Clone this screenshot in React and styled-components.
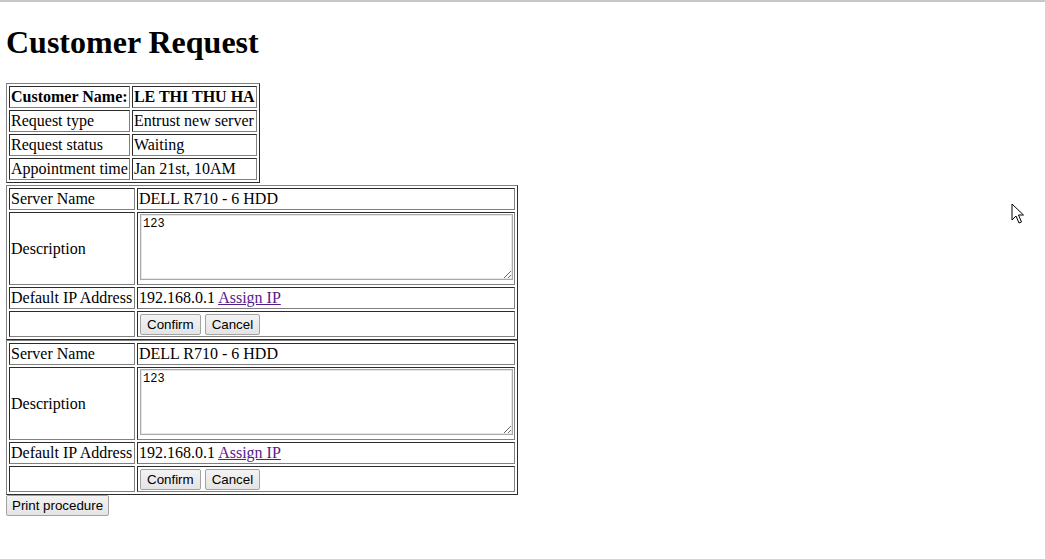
import React from "react";
import styled, { createGlobalStyle } from "styled-components";

const GlobalStyle = createGlobalStyle`
  html, body {
    margin: 0;
    background: #fff;
  }
  body {
    padding: 0 6px;
    border-top: 2px solid #c8c8c8;
    font-family: "Liberation Serif", "Times New Roman", serif;
    font-size: 16px;
    color: #000;
  }
`;

const Page = styled.main`
  position: relative;
  display: flow-root;
  min-height: 557px;
`;

const Title = styled.h1`
  font-size: 32px;
  font-weight: bold;
  margin: 22px 0 22px;
`;

const InfoTable = styled.table`
  border: 1px outset gray;
  border-spacing: 2px;
  border-collapse: separate;
`;

const ServerTable = styled(InfoTable)`
  width: 512px;
  margin-top: ${(p) => (p.$first ? "2px" : "0")};
`;

const Cell = styled.td`
  border: 1px inset gray;
  padding: 1px;
  font-weight: ${(p) => (p.$bold ? "bold" : "normal")};
  white-space: nowrap;
  vertical-align: middle;
`;

const LabelCell = styled(Cell)`
  width: 123px;
`;

const DescBox = styled.textarea`
  display: block;
  width: 373px;
  height: 66px;
  margin: 0 0 3px 1px;
  padding: 2px;
  box-sizing: border-box;
  border: 1px solid #a9a9a9;
  box-shadow: inset 0 0 0 1px #e6e6e6;
  font-family: "Liberation Mono", "DejaVu Sans Mono", monospace;
  font-size: 12px;
  line-height: 14px;
  color: #000;
  background: #fff;
  resize: both;
`;

const AssignLink = styled.a`
  color: #551a8b;
  text-decoration: underline;
  cursor: pointer;
`;

const Button = styled.button`
  font-family: "Liberation Sans", Arial, sans-serif;
  font-size: 13.33px;
  height: 21px;
  padding: 0 ${(p) => (p.$wide ? "5px" : "6px")};
  margin: 0;
  border: 1px solid #a3a3a3;
  border-radius: 2px;
  background: linear-gradient(#f3f3f3, #e4e4e4);
  color: #000;
  vertical-align: middle;
`;

const ButtonRow = styled.div`
  display: flex;
  gap: 4px;
  padding: 1px 0 0 1px;
`;

const Cursor = styled.svg`
  position: absolute;
  left: 1005px;
  top: 201px;
`;

const servers = [
  { name: "DELL R710 - 6 HDD", desc: "123", ip: "192.168.0.1" },
  { name: "DELL R710 - 6 HDD", desc: "123", ip: "192.168.0.1" },
];

function ServerBlock({ server, first }) {
  return (
    <ServerTable $first={first}>
      <tbody>
        <tr>
          <LabelCell>Server Name</LabelCell>
          <Cell>{server.name}</Cell>
        </tr>
        <tr>
          <LabelCell>Description</LabelCell>
          <Cell>
            <DescBox defaultValue={server.desc} />
          </Cell>
        </tr>
        <tr>
          <LabelCell>Default IP Address</LabelCell>
          <Cell>
            {server.ip} <AssignLink href="#">Assign IP</AssignLink>
          </Cell>
        </tr>
        <tr>
          <LabelCell></LabelCell>
          <Cell>
            <ButtonRow>
              <Button>Confirm</Button>
              <Button>Cancel</Button>
            </ButtonRow>
          </Cell>
        </tr>
      </tbody>
    </ServerTable>
  );
}

export default function App() {
  return (
    <Page>
      <GlobalStyle />
      <Title>Customer Request</Title>
      <InfoTable>
        <tbody>
          <tr>
            <Cell $bold>Customer Name:</Cell>
            <Cell $bold>LE THI THU HA</Cell>
          </tr>
          <tr>
            <Cell>Request type</Cell>
            <Cell>Entrust new server</Cell>
          </tr>
          <tr>
            <Cell>Request status</Cell>
            <Cell>Waiting</Cell>
          </tr>
          <tr>
            <Cell>Appointment time</Cell>
            <Cell>Jan 21st, 10AM</Cell>
          </tr>
        </tbody>
      </InfoTable>
      {servers.map((s, i) => (
        <ServerBlock key={i} server={s} first={i === 0} />
      ))}
      <Button $wide>Print procedure</Button>
      <Cursor width="14" height="22" viewBox="0 0 14 22">
        <path
          d="M1 1 L1 17 L5 13 L8 20 L10.5 19 L7.5 12 L12.5 12 Z"
          fill="#fff"
          stroke="#000"
          strokeWidth="1"
          strokeLinejoin="miter"
        />
      </Cursor>
    </Page>
  );
}
